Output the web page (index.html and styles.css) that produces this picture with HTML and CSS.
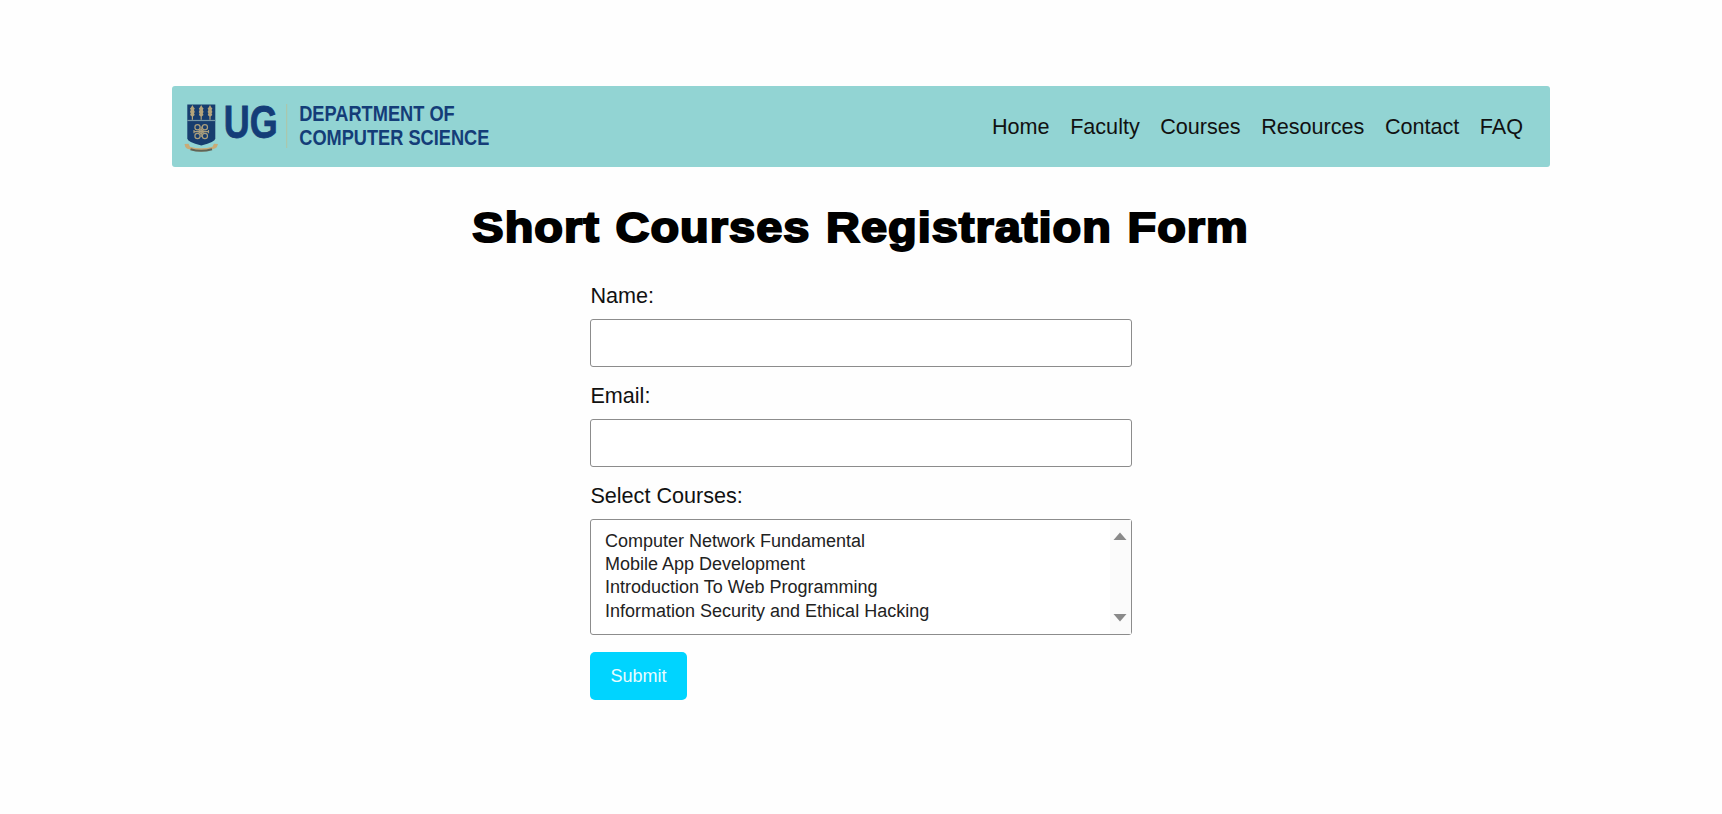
FILE: index.html
```html
<!DOCTYPE html>
<html lang="en">
<head>
<meta charset="utf-8">
<title>Short Courses Registration Form</title>
<link rel="stylesheet" href="styles.css">
</head>
<body>
<header class="site-header">
  <svg class="logo" width="330" height="72" viewBox="180 92 330 72" role="img" aria-label="UG Department of Computer Science">
    <path d="M187.300 104.500h28v34q0 3.500-14 7q-14-3.500-14-7z" fill="#173d6e"/>
    <path d="M187.300 120.500h28" stroke="#7797a5" stroke-width="1.200"/>
    <g fill="#b5a47b">
      <path id="ear" d="M192.400 105l1.400 2.500 1 1-.8 1.500.8 2-.8 1.200.7 1.800-1.700 1.500v3.200h-1.200v-3.200l-1.700-1.500.7-1.800-.8-1.200.8-2-.8-1.500 1-1z"/>
      <use href="#ear" x="8.800"/>
      <use href="#ear" x="17.600"/>
    </g>
    <g fill="none" stroke="#ab9e7c" stroke-width="1.200">
      <circle cx="197.500" cy="127.200" r="2.600"/><circle cx="204.900" cy="127.200" r="2.600"/>
      <circle cx="197.500" cy="136" r="2.600"/><circle cx="204.900" cy="136" r="2.600"/>
      <path d="M201.200 126.500v10.500M194 131.600h14.500M194 130v3.200M208.500 130v3.200"/>
      <path d="M201.200 129.400l3 2.200-3 2.200-3-2.200z"/>
    </g>
    <path d="M184.500 144l4-.3 1.500 3q11 3.200 22.500 0l1.500-3 4 .3-1.200 3.200-2 1.300q-14 6-28 0l-1.500-1.600z" fill="#c9ab76"/>
    <path d="M190.500 149.200q10.500 3.300 21.500 0" fill="none" stroke="#5f6457" stroke-width="2"/>
    <path d="M286.700 104v44" stroke="#b0c4a4" stroke-width="1"/>
    <g class="logo-text">
      <text class="logo-mark" x="223.800" y="137.600" font-size="46" textLength="54" lengthAdjust="spacingAndGlyphs">UG</text>
      <text x="299.200" y="121.300" font-size="22.500" textLength="155.500" lengthAdjust="spacingAndGlyphs">DEPARTMENT OF</text>
      <text x="299.300" y="145" font-size="22.500" textLength="190" lengthAdjust="spacingAndGlyphs">COMPUTER SCIENCE</text>
    </g>
  </svg>
  <nav class="nav">
    <a>Home</a><a>Faculty</a><a>Courses</a><a>Resources</a><a>Contact</a><a>FAQ</a>
  </nav>
</header>
<main>
  <h1 class="title">Short Courses Registration Form</h1>
  <form class="form">
    <label class="label" for="name">Name:</label>
    <input class="field" id="name" type="text">
    <label class="label" for="email">Email:</label>
    <input class="field" id="email" type="email">
    <div class="label">Select Courses:</div>
    <div class="listbox">
      <ul class="options">
        <li>Computer Network Fundamental</li>
        <li>Mobile App Development</li>
        <li>Introduction To Web Programming</li>
        <li>Information Security and Ethical Hacking</li>
      </ul>
      <div class="scrollbar">
        <svg width="14" height="8" viewBox="0 0 14 8"><path d="M.5 8L7 .5 13.500 8z"/></svg>
        <svg width="14" height="8" viewBox="0 0 14 8"><path d="M.5 0L7 7.500 13.500 0z"/></svg>
      </div>
    </div>
    <button class="submit" type="button">Submit</button>
  </form>
</main>
</body>
</html>
```
FILE: styles.css
```css
* { box-sizing: border-box; }
body {
  margin: 0;
  padding-top: 86px;
  background: #fefefe;
  color: #111;
  font-family: "Liberation Sans", Arial, sans-serif;
}
.site-header {
  width: 1378px;
  height: 81px;
  margin: 0 auto;
  padding: 0 27px 0 8px;
  display: flex;
  align-items: center;
  justify-content: space-between;
  background: #92d4d3;
  border-radius: 3px;
}
.logo { display: block; margin-top: 3px; overflow: visible; }
.logo-text { fill: #143d78; font-weight: bold; }
.logo-mark { stroke: #143d78; stroke-width: .8px; }
.nav { display: flex; gap: 20.5px; font-size: 21.6px; line-height: 26px; }
.title {
  width: fit-content;
  margin: 31px auto 0;
  font-size: 42px;
  line-height: 60px;
  font-weight: bold;
  white-space: nowrap;
  color: #000;
  letter-spacing: .9px;
  word-spacing: 1.500px;
  -webkit-text-stroke: 2px #000;
  transform: scaleX(1.117);
}
.form {
  width: 542px;
  margin: 23px auto 0;
  display: flex;
  flex-direction: column;
}
.label { font-size: 21.6px; line-height: 30px; margin-bottom: 8px; padding-left: .4px; }
.field {
  width: 100%;
  height: 48px;
  margin: 0 0 14px;
  border: 1px solid #8c8c8c;
  border-radius: 3px;
  background: #fff;
}
.listbox {
  height: 116px;
  display: flex;
  justify-content: space-between;
  border: 1px solid #8c8c8c;
  border-radius: 3px;
  background: #fff;
}
.options {
  list-style: none;
  margin: 0;
  padding: 10px 0 0 14px;
  font-size: 18px;
  line-height: 23.200px;
  color: #222;
}
.scrollbar {
  width: 21px;
  padding: 12px 3px;
  display: flex;
  flex-direction: column;
  justify-content: space-between;
  background: #fbfbfb;
  fill: #8a8a8a;
}
.submit {
  align-self: flex-start;
  width: 97px;
  height: 48px;
  margin-top: 17px;
  border: 0;
  border-radius: 5px;
  background: #00d4ff;
  color: #e8fcff;
  font: 18px "Liberation Sans", Arial, sans-serif;
}
```
